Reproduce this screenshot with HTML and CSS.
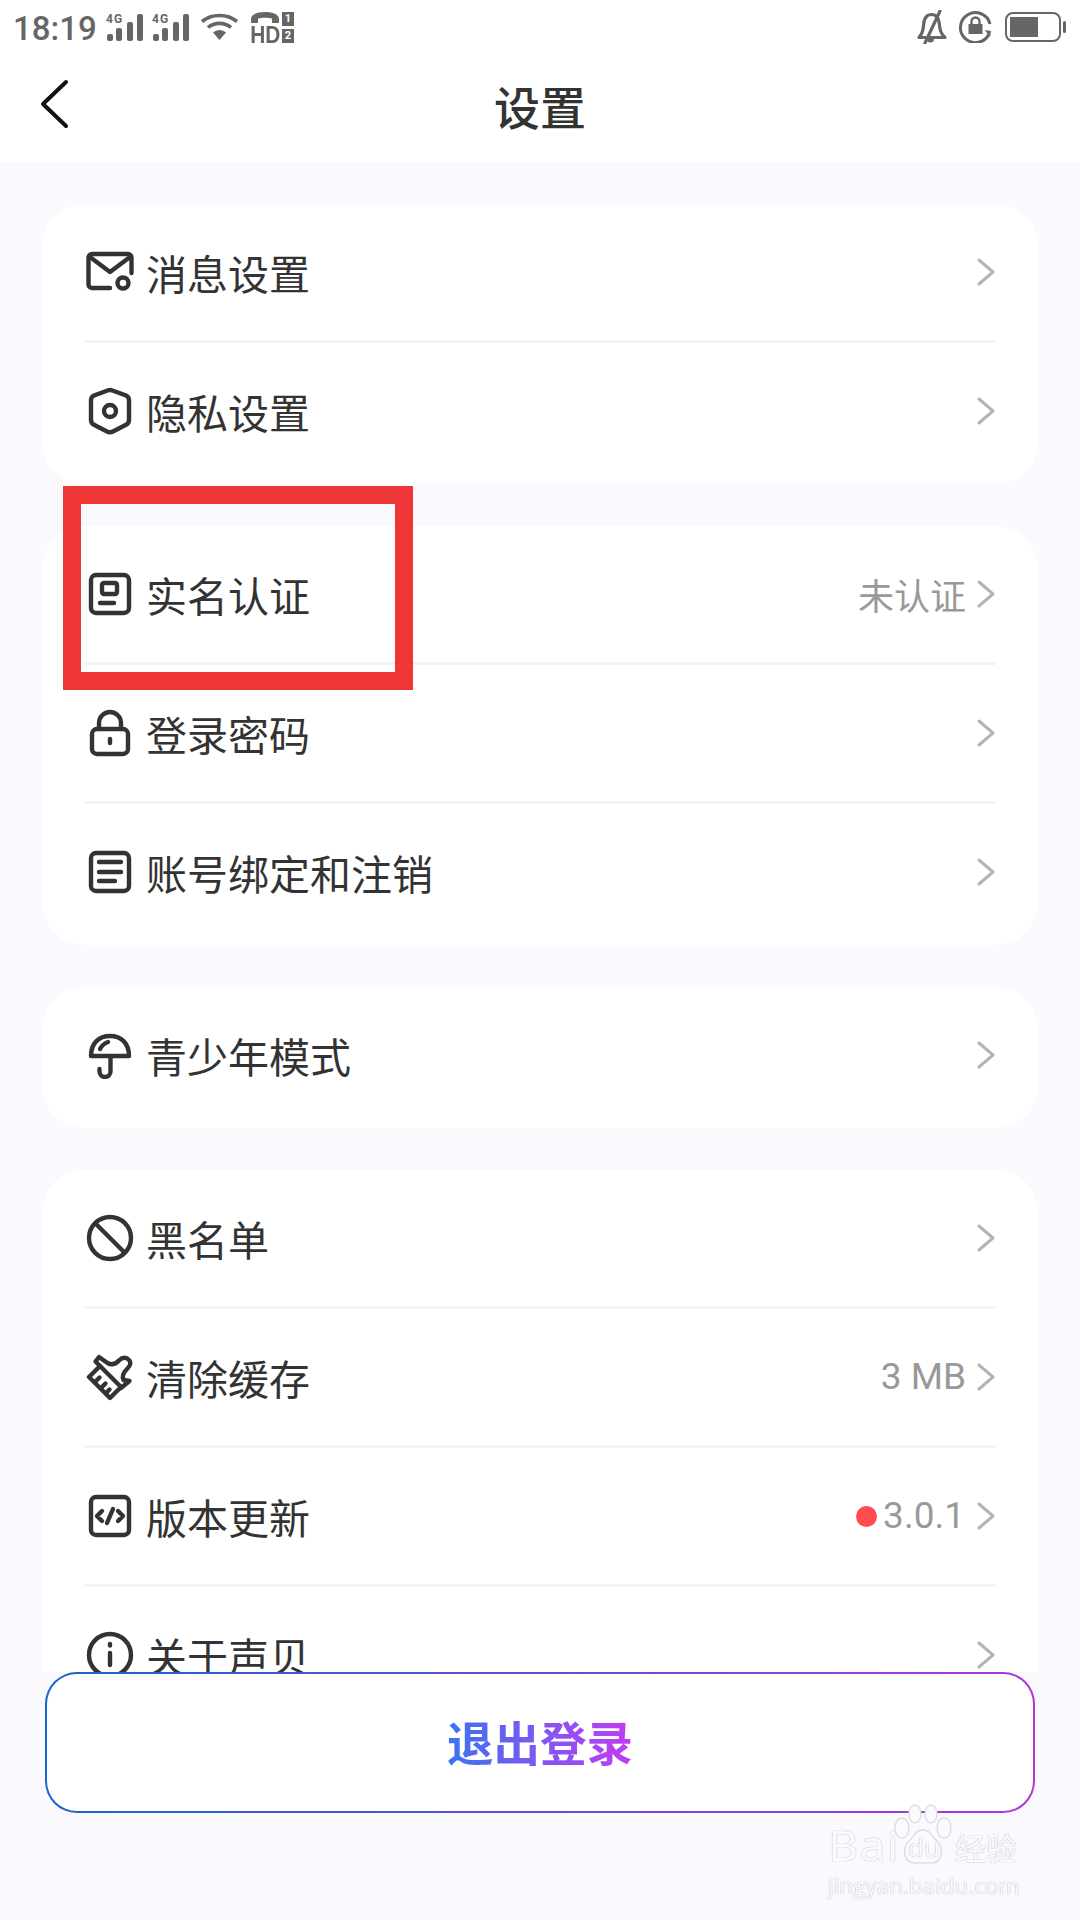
FILE: index.html
```html
<!DOCTYPE html>
<html lang="zh-CN">
<head>
    <meta charset="UTF-8">
    <meta name="viewport" content="width=device-width, initial-scale=1.0">
    <title>设置</title>
    <link rel="stylesheet" href="styles.css">
</head>
<body>
    <div class="screen">
        <div class="header">
            <div class="status-bar">
                <div class="status-left">
                    <span class="clock">18:19</span>
                    <span class="signal"><span class="signal-label">4G</span><svg width="38" height="28" viewBox="0 0 38 28"><g fill="#666"><rect x="1" y="20" width="6" height="7" rx="2"/><rect x="10" y="14" width="6" height="13" rx="2"/><rect x="21" y="8" width="6" height="19" rx="2"/><rect x="31" y="0" width="6" height="27" rx="2"/></g></svg></span>
                    <span class="signal"><span class="signal-label">4G</span><svg width="38" height="28" viewBox="0 0 38 28"><g fill="#666"><rect x="1" y="20" width="6" height="7" rx="2"/><rect x="10" y="14" width="6" height="13" rx="2"/><rect x="21" y="8" width="6" height="19" rx="2"/><rect x="31" y="0" width="6" height="27" rx="2"/></g></svg></span>
                    <svg class="wifi" width="39" height="28" viewBox="0 0 38 28"><g fill="none" stroke="#666" stroke-width="3.6"><path d="M1.500 8.500C11 .5 27 .5 36.500 8.500"/><path d="M7.500 14.500C14 9 24 9 30.500 14.500"/></g><path fill="#666" d="M12.500 19.500C16.500 16 21.500 16 25.500 19.500L19 27z"/></svg>
                    <span class="hd">
                        <span class="hd-main"><svg width="30" height="12" viewBox="0 0 28 12"><path fill="#666" d="M0 11V7C0 2.500 6 0 14 0s14 2.500 14 7v4h-7V6.500c-4-1-10-1-14 0V11z"/></svg><span class="hd-text">HD</span></span>
                        <span class="hd-sims"><span class="sim">1</span><span class="sim">2</span></span>
                    </span>
                </div>
                <div class="status-right">
                    <svg width="32" height="34" viewBox="0 0 32 34"><g fill="none" stroke="#666" stroke-width="3.200"><path d="M3 27.500c3-3 4-6 4.500-12C8 8 11 4.500 15.500 4.500S23 8 23.500 15.500c.5 6 2 9 5.500 12z" stroke-linejoin="round"/><path d="M24 1 9 33" stroke-linecap="round"/></g><path fill="#666" d="M11 29h7a3.500 3.500 0 0 1-7 0z"/></svg>
                    <svg width="33" height="33" viewBox="0 0 33 33"><path fill="none" stroke="#666" stroke-width="3" d="M30 24A15 15 0 1 1 31 14"/><path fill="#666" d="M9.500 14h14v10h-14z"/><path fill="none" stroke="#666" stroke-width="2.400" d="M12.500 14v-2.500a4 4 0 0 1 8 0V14"/><path fill="#666" d="M26 20l6 1-1 6z"/></svg>
                    <span class="battery"><span class="battery-fill"></span></span>
                </div>
            </div>
            <div class="nav">
                <svg class="back" width="30" height="50" viewBox="0 0 30 50"><path fill="none" stroke="#111" stroke-width="4" stroke-linecap="round" stroke-linejoin="round" d="M26 3 3 25l23 22"/></svg>
                <h1 class="title">设置</h1>
            </div>
        </div>

        <div class="list">
            <div class="card">
                <div class="row">
                    <svg class="icon" viewBox="0 0 48 48"><path d="M24 40H6a3.500 3.500 0 0 1-3.500-3.500v-27A3.500 3.500 0 0 1 6 6h36a3.500 3.500 0 0 1 3.500 3.500V25"/><path d="M4 9l20 15L44 9"/><circle cx="37" cy="35" r="5.500"/></svg>
                    <span class="row-label">消息设置</span>
                    <svg class="chevron" viewBox="0 0 18 28"><path d="M2 2l14 12L2 26"/></svg>
                </div>
                <div class="row">
                    <svg class="icon" viewBox="0 0 48 48"><path d="M21.500 3.500q2.500-1 5 0l13.500 5Q43 10 43 13v20q0 3-2.500 4.500L27 44.500q-3 1.500-6 0L7.500 37.500Q5 36 5 33V13q0-3 3-4.500z"/><circle cx="24" cy="24" r="6"/></svg>
                    <span class="row-label">隐私设置</span>
                    <svg class="chevron" viewBox="0 0 18 28"><path d="M2 2l14 12L2 26"/></svg>
                </div>
            </div>

            <div class="card">
                <div class="row">
                    <svg class="icon" viewBox="0 0 48 48"><rect x="5" y="5" width="38" height="38" rx="5"/><rect x="16" y="13" width="15" height="11" rx="2"/><path d="M14 33h14"/></svg>
                    <span class="row-label">实名认证</span>
                    <span class="row-value cn">未认证</span>
                    <svg class="chevron" viewBox="0 0 18 28"><path d="M2 2l14 12L2 26"/></svg>
                </div>
                <div class="row">
                    <svg class="icon" viewBox="0 0 48 48"><rect x="6" y="20" width="36" height="25" rx="5"/><path d="M13 20v-6a11 11 0 0 1 22 0v6"/><path d="M24 30v4"/></svg>
                    <span class="row-label">登录密码</span>
                    <svg class="chevron" viewBox="0 0 18 28"><path d="M2 2l14 12L2 26"/></svg>
                </div>
                <div class="row">
                    <svg class="icon" viewBox="0 0 48 48"><rect x="5" y="5" width="38" height="38" rx="5"/><path d="M13 14h22M13 24h22M13 33h16"/></svg>
                    <span class="row-label">账号绑定和注销</span>
                    <svg class="chevron" viewBox="0 0 18 28"><path d="M2 2l14 12L2 26"/></svg>
                </div>
            </div>

            <div class="card">
                <div class="row">
                    <svg class="icon" viewBox="0 0 48 48"><path d="M5 25C5 12 13 5 24 5s19 7 19 20z"/><path d="M14 18c1.500-3 4-5.500 8-7"/><path d="M24.500 25v15.500a5.500 5.500 0 0 1-11 0V38"/></svg>
                    <span class="row-label">青少年模式</span>
                    <svg class="chevron" viewBox="0 0 18 28"><path d="M2 2l14 12L2 26"/></svg>
                </div>
            </div>

            <div class="card">
                <div class="row">
                    <svg class="icon" viewBox="0 0 48 48"><circle cx="24" cy="24" r="21"/><path d="M10 10l28 28"/></svg>
                    <span class="row-label">黑名单</span>
                    <svg class="chevron" viewBox="0 0 18 28"><path d="M2 2l14 12L2 26"/></svg>
                </div>
                <div class="row">
                    <svg class="icon" viewBox="0 0 48 48"><path d="M3 24 14 13 35 34 24 45z"/><path d="M14 13 9.500 8.500 13 4l8.500 6c5 3 8.500 1 12-3 3-3 7-3 9-.5 3 3 2 6-1.500 9.500-3.500 3.500-5.500 7-3.500 11l6 1-8.500 7"/><path d="M9.500 28.500l4-4M15.500 34.500l4-4M20.500 39.500l3-3"/></svg>
                    <span class="row-label">清除缓存</span>
                    <span class="row-value">3 MB</span>
                    <svg class="chevron" viewBox="0 0 18 28"><path d="M2 2l14 12L2 26"/></svg>
                </div>
                <div class="row">
                    <svg class="icon" viewBox="0 0 48 48"><rect x="5" y="5" width="38" height="38" rx="5"/><path d="M16 19l-5 5 5 5M32 19l5 5-5 5M27 17l-6 14"/></svg>
                    <span class="row-label">版本更新</span>
                    <span class="dot"></span>
                    <span class="row-value version">3.0.1</span>
                    <svg class="chevron" viewBox="0 0 18 28"><path d="M2 2l14 12L2 26"/></svg>
                </div>
                <div class="row">
                    <svg class="icon" viewBox="0 0 48 48"><circle cx="24" cy="24" r="21"/><path d="M24 22v12M24 13v1.500"/></svg>
                    <span class="row-label">关于声贝</span>
                    <svg class="chevron" viewBox="0 0 18 28"><path d="M2 2l14 12L2 26"/></svg>
                </div>
            </div>
        </div>

        <div class="footer">
            <div class="logout"><span class="logout-text">退出登录</span></div>
        </div>

        <!-- screenshot annotation -->
        <div class="highlight"></div>

        <div class="watermark">
            <div class="wm-top">
                <span class="wm-bai">Bai</span>
                <span class="wm-paw">
                    <svg width="58" height="62" viewBox="0 0 58 62"><g fill="#fbfbfe" stroke="#dedee3" stroke-width="1.500"><ellipse cx="8" cy="24" rx="7" ry="10"/><ellipse cx="21" cy="10" rx="6" ry="9"/><ellipse cx="37" cy="10" rx="6" ry="9"/><ellipse cx="50" cy="24" rx="7" ry="10"/><path d="M29 26c-8 0-9 8-15 12-6 5-5 22 8 21h14c13 1 14-16 8-21-6-4-7-12-15-12z"/></g></svg>
                    <span class="wm-du">du</span>
                </span>
                <span class="wm-jy">经验</span>
            </div>
            <div class="wm-url">jingyan.baidu.com</div>
        </div>
    </div>
</body>
</html>
```

FILE: styles.css
```css
* {
    box-sizing: border-box;
}

body {
    margin: 0;
    font-family: "Noto Sans CJK SC", Roboto, sans-serif;
    color: #333;
}

.screen {
    position: relative;
    width: 1080px;
    height: 1920px;
    overflow: hidden;
    background: #f9f9fe;
}

/* header */
.header {
    height: 162px;
    background: #fff;
}

.status-bar {
    display: flex;
    justify-content: space-between;
    align-items: flex-start;
    height: 54px;
    padding: 10px 15px 0 13px;
}

.status-left,
.status-right {
    display: flex;
    align-items: flex-start;
}

.clock {
    width: 93px;
    font-family: Roboto, sans-serif;
    font-size: 33px;
    font-weight: 500;
    line-height: 36px;
    color: #666;
    margin-top: 1px;
}

.signal {
    position: relative;
    display: block;
    width: 46px;
    height: 32px;
    padding-top: 4px;
}

.signal svg {
    display: block;
}

.signal-label {
    position: absolute;
    left: 0;
    top: 3px;
    font-family: Roboto, sans-serif;
    font-size: 12px;
    font-weight: 700;
    line-height: 12px;
    letter-spacing: 1px;
    color: #666;
}

.wifi {
    margin: 3px 0 0 2px;
}

.hd {
    display: flex;
    margin: 2px 0 0 11px;
    gap: 2px;
}

.hd-main {
    display: flex;
    flex-direction: column;
    align-items: center;
    width: 30px;
}

.hd-main svg {
    display: block;
}

.hd-text {
    font-family: "Liberation Sans", sans-serif;
    font-size: 24px;
    font-weight: 700;
    line-height: 19px;
    color: #666;
    margin-top: 1px;
    transform: scaleX(0.87);
}

.hd-sims {
    display: flex;
    flex-direction: column;
    gap: 3px;
}

.sim {
    display: block;
    width: 12px;
    height: 14px;
    background: #666;
    color: #fff;
    font-family: Roboto, sans-serif;
    font-size: 11px;
    font-weight: 700;
    line-height: 14px;
    text-align: center;
}

.status-right {
    gap: 11px;
}

.status-right svg {
    display: block;
}

.battery {
    position: relative;
    display: block;
    width: 56px;
    height: 30px;
    margin: 2px 4px 0 2px;
    padding: 3px;
    border: 2px solid #666;
    border-radius: 8px;
}

.battery::after {
    content: "";
    position: absolute;
    right: -7px;
    top: 7px;
    width: 3px;
    height: 12px;
    border-radius: 2px;
    background: #666;
}

.battery-fill {
    display: block;
    width: 28px;
    height: 100%;
    background: #666;
}

.nav {
    position: relative;
    display: flex;
    align-items: center;
    justify-content: center;
    height: 108px;
}

.back {
    position: absolute;
    left: 40px;
    top: 25px;
}

.title {
    margin: 0 0 6px;
    font-size: 46px;
    font-weight: 500;
    line-height: 60px;
    color: #333;
}

/* list */
.list {
    display: flex;
    flex-direction: column;
    gap: 42px;
    padding: 42px 42px 0;
}

.card {
    padding: 0 42px;
    background: #fff;
    border-radius: 42px;
}

.row {
    display: flex;
    align-items: center;
    height: 139px;
    border-bottom: 3px solid #f3f3f3;
}

.row:last-child {
    height: 141px;
    padding-bottom: 5px;
    border-bottom: 0;
}

.icon {
    flex: none;
    width: 48px;
    height: 48px;
    margin: 0 12px 0 2px;
    fill: none;
    stroke: #333;
    stroke-width: 4.4;
    stroke-linecap: round;
    stroke-linejoin: round;
}

.row-label {
    margin-right: auto;
    font-size: 41px;
    line-height: 56px;
    color: #333;
}

.row-value {
    font-family: Roboto, sans-serif;
    font-size: 37px;
    line-height: 50px;
    color: #999;
    margin-right: 11px;
}

.row-value.cn {
    font-family: "Noto Sans CJK SC", sans-serif;
    font-size: 36px;
}

.version {
    margin-left: 6px;
    margin-right: 12px;
}

.dot {
    flex: none;
    width: 21px;
    height: 21px;
    border-radius: 50%;
    background: #ff4d4f;
}

.chevron {
    flex: none;
    width: 18px;
    height: 28px;
    margin-right: 1px;
    fill: none;
    stroke: #b4b4b4;
    stroke-width: 3;
    stroke-linecap: round;
    stroke-linejoin: round;
}

/* logout footer sits over the end of the list */
.footer {
    position: absolute;
    left: 0;
    right: 0;
    top: 1672px;
    bottom: 0;
    padding: 0 45px;
    background: #f9f9fe;
}

.logout {
    display: flex;
    align-items: center;
    justify-content: center;
    height: 141px;
    padding-bottom: 3px;
    border: 2.5px solid transparent;
    border-radius: 32px;
    background: linear-gradient(#fff, #fff) padding-box,
        linear-gradient(90deg, #1766cc, #b136d8) border-box;
}

.logout-text {
    font-size: 46.5px;
    font-weight: 700;
    line-height: 62px;
    background: linear-gradient(90deg, #3a74f2, #c33bf2);
    -webkit-background-clip: text;
    background-clip: text;
    color: transparent;
}

/* red box drawn on the screenshot */
.highlight {
    position: absolute;
    left: 63px;
    top: 486px;
    width: 350px;
    height: 204px;
    border: 18px solid #ee3636;
}

/* baidu watermark */
.watermark {
    position: absolute;
    left: 828px;
    top: 1800px;
    width: 194px;
    color: #fbfbfe;
    text-shadow: 0 0 1px #bdbdc3, 0 0 1px #bdbdc3;
}

.wm-top {
    display: flex;
    align-items: flex-end;
    height: 66px;
}

.wm-bai {
    flex: none;
    font-family: "Open Sans", sans-serif;
    font-size: 42px;
    font-weight: 400;
    line-height: 44px;
    letter-spacing: 1px;
    transform: scaleX(1.12);
    transform-origin: left bottom;
    width: 66px;
    margin-bottom: -1px;
}

.wm-paw {
    position: relative;
    display: block;
    width: 58px;
    height: 62px;
    flex: none;
}

.wm-paw svg {
    display: block;
}

.wm-du {
    position: absolute;
    left: 14px;
    bottom: 6px;
    font-family: "Open Sans", sans-serif;
    font-size: 26px;
    line-height: 26px;
}

.wm-jy {
    font-size: 31px;
    line-height: 44px;
    margin: 0 0 -3px 3px;
    white-space: nowrap;
}

.wm-url {
    font-family: "Open Sans", sans-serif;
    font-size: 22.5px;
    line-height: 28px;
    margin-top: 6px;
    white-space: nowrap;
}
```
